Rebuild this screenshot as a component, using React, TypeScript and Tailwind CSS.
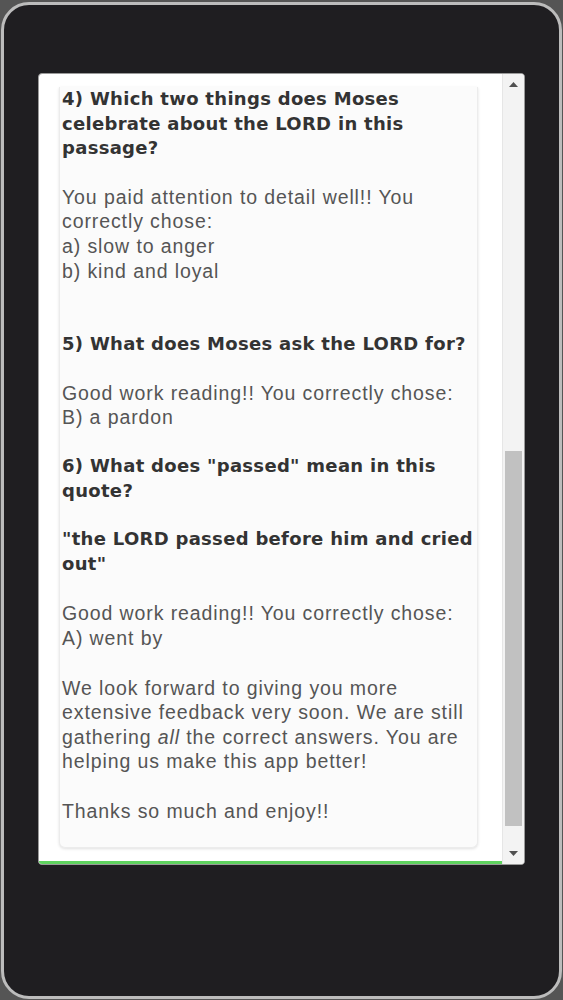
import React from "react";

const H = "font-['DejaVu_Sans',sans-serif] font-bold text-[18px] tracking-[0.3px] leading-[24.6px] text-[#333333]";
const B = "font-['Liberation_Sans',Arial,sans-serif] text-[19.5px] tracking-[0.9px] leading-[24.6px] text-[#555555]";

export default function App() {
  return (
    <div className="w-[563px] h-[1000px] bg-[#555555] px-[1px] pt-[2px] pb-[1px]">
      <div className="h-full border-[3px] border-[#bcbcbc] rounded-[28px] bg-[#1f1e21] pl-[34px] pt-[68px]">
        <div className="w-[487px] h-[792px] bg-white border border-[#9a9a9a] rounded-[4px] flex overflow-hidden">
          <div className="flex-1 flex flex-col">
            <div className="flex-1 overflow-hidden pt-[13px]">
              <div className="ml-[20px] w-[419px] bg-[#fbfbfb] border border-t-0 border-[#ececec] rounded-b-[6px] shadow-[0_1px_3px_rgba(0,0,0,0.12)] pl-[2px] pr-[4px] pb-[24px]">
                <p className={H}>4) Which two things does Moses celebrate about the LORD in this passage?</p>
                <p className={B + " mt-[24px]"}>
                  You paid attention to detail well!! You correctly chose:<br />a) slow to anger<br />b) kind and loyal
                </p>
                <p className={H + " mt-[49px]"}>5) What does Moses ask the LORD for?</p>
                <p className={B + " mt-[24px]"}>
                  Good work reading!! You correctly chose:<br />B) a pardon
                </p>
                <p className={H + " mt-[24px]"}>6) What does "passed" mean in this quote?</p>
                <p className={H + " mt-[24px]"}>"the LORD passed before him and cried out"</p>
                <p className={B + " mt-[25px]"}>
                  Good work reading!! You correctly chose:<br />A) went by
                </p>
                <p className={B + " mt-[25px]"}>
                  We look forward to giving you more extensive feedback very soon. We are still gathering <i>all</i> the correct answers. You are helping us make this app better!
                </p>
                <p className={B + " mt-[25px]"}>Thanks so much and enjoy!!</p>
              </div>
            </div>
            <div className="h-[3px] bg-[#5fd35f]" />
          </div>
          <div className="w-[22px] bg-[#f3f3f3] border-l border-[#e6e6e6] flex flex-col items-center">
            <div className="h-[17px] w-full flex items-center justify-center pt-[4px]">
              <svg width="9" height="5" viewBox="0 0 9 5"><polygon points="0,5 9,5 4.5,0" fill="#505050" /></svg>
            </div>
            <div className="flex-1 w-full px-[2px] flex flex-col">
              <div className="h-[360px]" />
              <div className="h-[375px] bg-[#c1c1c1]" />
              <div className="flex-1" />
            </div>
            <div className="h-[22px] w-full flex items-center justify-center">
              <svg width="9" height="5" viewBox="0 0 9 5"><polygon points="0,0 9,0 4.5,5" fill="#505050" /></svg>
            </div>
          </div>
        </div>
      </div>
    </div>
  );
}
